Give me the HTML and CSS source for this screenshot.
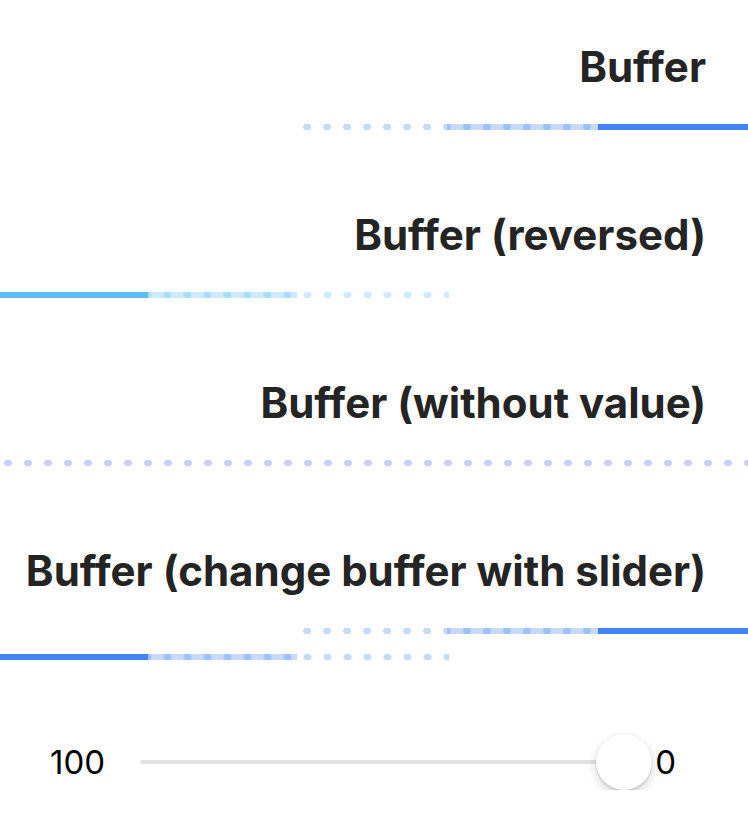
FILE: index.html
```html
<!DOCTYPE html>
<html lang="en" dir="rtl">
<head>
<meta charset="utf-8">
<title>Progress Bar Buffer</title>
<link rel="stylesheet" href="styles.css">
</head>
<body>
<main class="page">
  <section class="block">
    <h2 class="title">Buffer</h2>
    <div class="bar primary">
      <div class="dots"></div>
      <div class="buffer" style="width:67%"></div>
      <div class="fill" style="width:33.4%"></div>
    </div>
  </section>
  <section class="block">
    <h2 class="title">Buffer (reversed)</h2>
    <div class="bar secondary reversed">
      <div class="dots"></div>
      <div class="buffer" style="width:66.2%"></div>
      <div class="fill" style="width:33%"></div>
    </div>
  </section>
  <section class="block">
    <h2 class="title">Buffer (without value)</h2>
    <div class="bar tertiary full">
      <div class="dots"></div>
    </div>
  </section>
  <section class="block last">
    <h2 class="title">Buffer (change buffer with slider)</h2>
    <div class="bar primary">
      <div class="dots"></div>
      <div class="buffer" style="width:67%"></div>
      <div class="fill" style="width:33.4%"></div>
    </div>
    <div class="bar primary reversed second">
      <div class="dots"></div>
      <div class="buffer" style="width:66.2%"></div>
      <div class="fill" style="width:33%"></div>
    </div>
  </section>
  <div class="range-row" dir="ltr">
    <span class="range-label">100</span>
    <div class="range-track">
      <span class="range-knob"></span>
    </div>
    <span class="range-label">0</span>
  </div>
</main>
</body>
</html>
```

FILE: styles.css
```css
html, body {
  margin: 0;
  padding: 0;
  background: #ffffff;
}

body {
  font-family: Inter, "Noto Sans", "Liberation Sans", sans-serif;
  color: #222222;
}

.page {
  direction: rtl;
  padding-top: 43px;
  width: 748px;
  overflow: hidden;
}

.block {
  margin-bottom: 81px;
}

.block.last {
  margin-bottom: 74px;
}

.title {
  margin: 0;
  padding-right: 42px;
  font-size: 42px;
  line-height: 48px;
  font-weight: 700;
  text-align: right;
  color: #242424;
  letter-spacing: 0;
}

.bar {
  --c: 68, 133, 245;
  position: relative;
  width: 60%;
  height: 6px;
  margin-top: 33px;
  overflow: hidden;
}

.bar.primary { --c: 68, 133, 245; }
.bar.secondary { --c: 90, 189, 249; }
.bar.tertiary { --c: 82, 96, 255; }

.bar.full {
  width: 100%;
}

.bar.reversed {
  margin-right: auto;
  margin-left: 0;
}

.bar.second {
  margin-top: 20px;
}

.dots {
  position: absolute;
  inset: 0;
  background-image: radial-gradient(circle, rgba(var(--c), 0.3) 3.5px, rgba(var(--c), 0) 4.1px);
  background-size: 20px 6px;
  background-position: -2px 0;
  background-repeat: repeat-x;
}

.bar.reversed .dots {
  background-position: -2.5px 0;
}

.buffer,
.fill {
  position: absolute;
  top: 0;
  bottom: 0;
  right: 0;
}

.bar.reversed .buffer,
.bar.reversed .fill {
  right: auto;
  left: 0;
}

.buffer {
  background: rgba(var(--c), 0.3);
}

.fill {
  background: rgb(var(--c));
}

.range-row {
  display: flex;
  align-items: center;
  height: 56px;
  padding-left: 50px;
  padding-right: 72px;
}

.range-label {
  font-size: 33px;
  line-height: 40px;
  color: #000000;
  font-weight: 400;
}

.range-track {
  position: relative;
  flex: 1;
  height: 4px;
  margin-left: 35px;
  margin-right: 31px;
  background: #e2e2e2;
  border-radius: 2px;
}

.range-knob {
  position: absolute;
  right: -28px;
  top: 50%;
  width: 56px;
  height: 56px;
  margin-top: -28px;
  border-radius: 50%;
  background: #ffffff;
  box-shadow: 0 4px 10px rgba(0, 0, 0, 0.18), 0 2px 2px rgba(0, 0, 0, 0.08), 0 0 0 1px rgba(0, 0, 0, 0.02);
}
```
